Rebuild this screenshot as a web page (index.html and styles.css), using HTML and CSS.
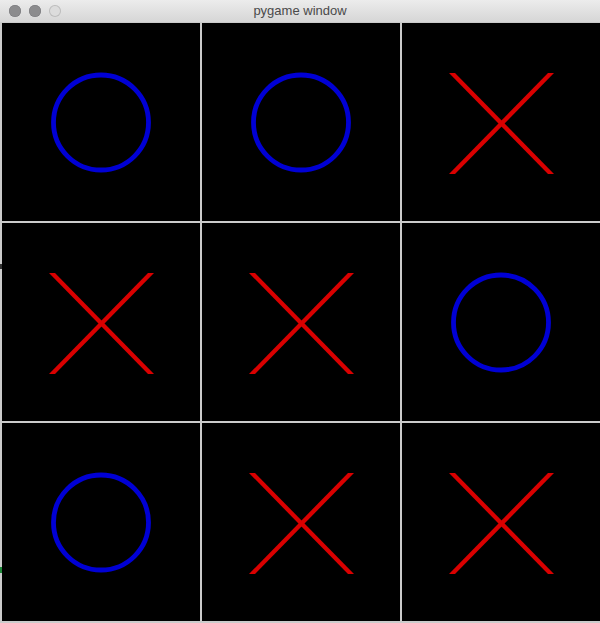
FILE: index.html
```html
<!DOCTYPE html>
<html>
<head>
<meta charset="utf-8">
<link rel="stylesheet" href="styles.css">
</head>
<body>
<div class="window">
  <div class="titlebar">
    <div class="lights">
      <span class="light"></span>
      <span class="light"></span>
      <span class="light off"></span>
    </div>
    <div class="title">pygame window</div>
  </div>
  <div class="board">
    <div class="cell"><svg viewBox="0 0 198 198" class="mark"><circle class="o" cx="99" cy="99.5" r="47.5"/></svg></div>
    <div class="cell"><svg viewBox="0 0 198 198" class="mark"><circle class="o" cx="99" cy="99.5" r="47.5"/></svg></div>
    <div class="cell"><svg viewBox="0 0 198 198" class="mark"><polygon class="x" points="47,50 53,50 152,151 146,151"/><polygon class="x" points="146,50 152,50 53,151 47,151"/></svg></div>
    <div class="cell"><svg viewBox="0 0 198 198" class="mark"><polygon class="x" points="47,50 53,50 152,151 146,151"/><polygon class="x" points="146,50 152,50 53,151 47,151"/></svg></div>
    <div class="cell"><svg viewBox="0 0 198 198" class="mark"><polygon class="x" points="47,50 53,50 152,151 146,151"/><polygon class="x" points="146,50 152,50 53,151 47,151"/></svg></div>
    <div class="cell"><svg viewBox="0 0 198 198" class="mark"><circle class="o" cx="99" cy="99.5" r="47.5"/></svg></div>
    <div class="cell"><svg viewBox="0 0 198 198" class="mark"><circle class="o" cx="99" cy="99.5" r="47.5"/></svg></div>
    <div class="cell"><svg viewBox="0 0 198 198" class="mark"><polygon class="x" points="47,50 53,50 152,151 146,151"/><polygon class="x" points="146,50 152,50 53,151 47,151"/></svg></div>
    <div class="cell"><svg viewBox="0 0 198 198" class="mark"><polygon class="x" points="47,50 53,50 152,151 146,151"/><polygon class="x" points="146,50 152,50 53,151 47,151"/></svg></div>
  </div>
  <span class="tick dark"></span>
  <span class="tick green"></span>
</div>
</body>
</html>
```

FILE: styles.css
```css
html, body {
  margin: 0;
  padding: 0;
  background: #000;
}
.window {
  position: relative;
  width: 600px;
  height: 623px;
  overflow: hidden;
  font-family: "Liberation Sans", "DejaVu Sans", Arial, sans-serif;
}
.titlebar {
  position: relative;
  height: 22px;
  background: linear-gradient(#ececec, #d6d6d6);
  display: flex;
  align-items: center;
  justify-content: center;
}
.lights {
  position: absolute;
  left: 9px;
  top: 5px;
  display: flex;
  gap: 8px;
}
.light {
  width: 12px;
  height: 12px;
  border-radius: 50%;
  background: #8c8c8e;
  box-shadow: inset 0 0 0 0.5px #76767a;
}
.light.off {
  background: #dcdcdc;
  box-shadow: inset 0 0 0 1px #bdbdbd;
}
.title {
  font-size: 13px;
  color: #4a4a4a;
  line-height: 22px;
}
.board {
  background: #cbcbcb;
  padding: 1px 0 2px 2px;
  display: grid;
  grid-template-columns: 198px 198px 198px;
  grid-template-rows: 198px 198px 198px;
  gap: 2px;
}
.cell {
  background: #000;
  width: 198px;
  height: 198px;
}
.mark {
  display: block;
  width: 198px;
  height: 198px;
}
.o {
  fill: none;
  stroke: #0000d4;
  stroke-width: 4.8;
}
.x {
  fill: #d90000;
}
.tick {
  position: absolute;
  left: 0;
  width: 2px;
}
.tick.dark {
  top: 264px;
  height: 5px;
  background: #333;
}
.tick.green {
  top: 567px;
  height: 6px;
  background: #1f8a3a;
}
```
